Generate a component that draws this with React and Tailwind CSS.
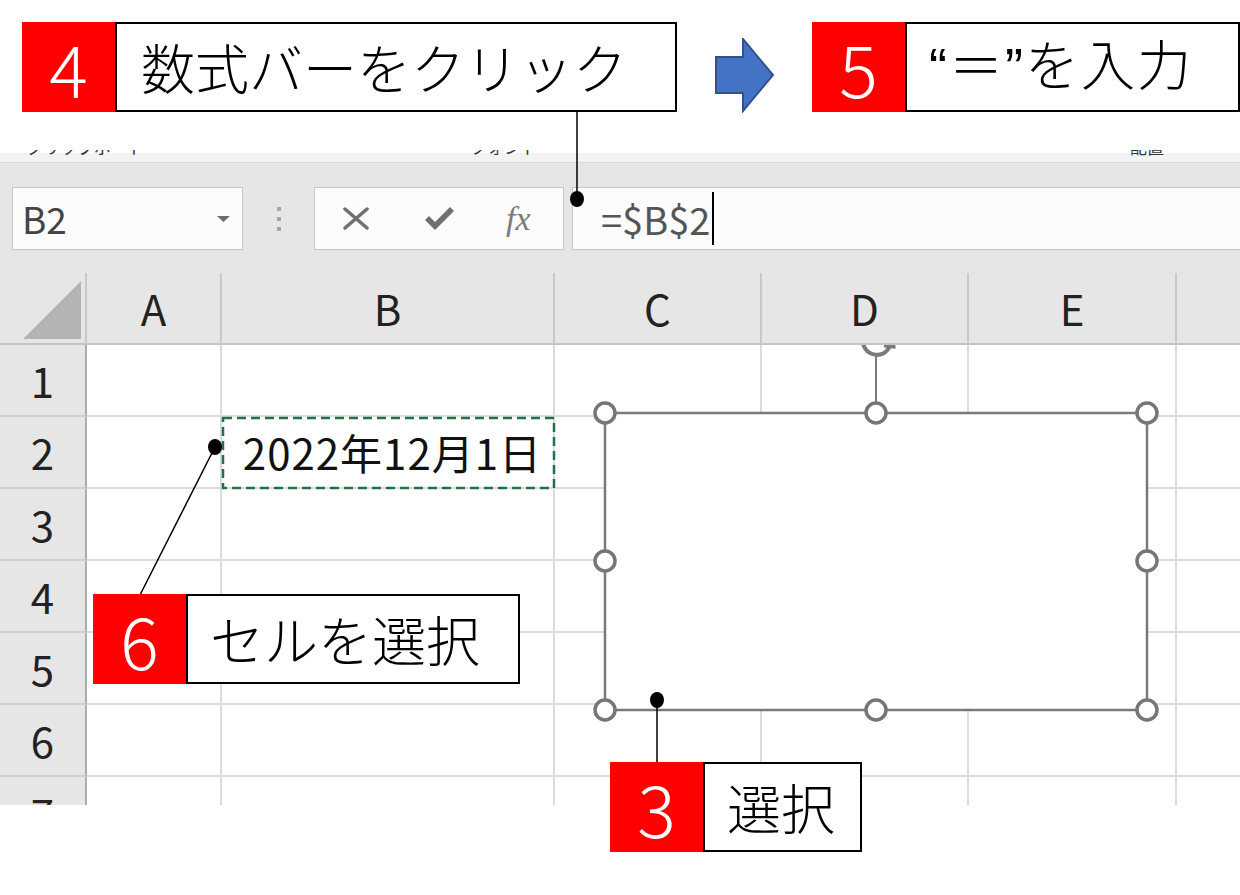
import React from 'react';

const colLetters = ['', 'A', 'B', 'C', 'D', 'E', ''];
const rowNums = [1, 2, 3, 4, 5, 6, 7];

// red number + white label box
function Callout({ num, boxClass, children }) {
  return (
    <div className="flex h-[90px]">
      <div className="w-[93px] shrink-0 bg-[#ff0000] flex items-center justify-center text-white text-[72px] font-light leading-none">
        {num}
      </div>
      <div className={`h-[90px] border-2 border-black bg-white flex items-center text-[54px] font-light leading-none text-black whitespace-nowrap ${boxClass}`}>
        {children}
      </div>
    </div>
  );
}

function Handle({ x, y }) {
  return <circle cx={x} cy={y} r="10" fill="#fff" stroke="#767676" strokeWidth="3.5" />;
}

export default function App() {
  return (
    <div className="relative w-[1240px] h-[895px] overflow-hidden bg-white font-['Noto_Sans_CJK_JP',sans-serif]">
      {/* top annotation row */}
      <div className="h-[150px] flex items-start pt-[22px] pl-[22px]">
        <Callout num="4" boxClass="w-[562px] pl-[24px]">数式バーをクリック</Callout>
        <svg className="ml-[38px] mt-[16px] shrink-0" width="60" height="75" viewBox="0 0 60 75">
          <polygon points="1,19 28,19 28,1 58,37 28,73 28,55 1,55" fill="#4472c4" stroke="#2f528f" strokeWidth="2" />
        </svg>
        <div className="ml-[37px]">
          <Callout num="5" boxClass="w-[335px] pl-[22px] tracking-[2px] font-['Liberation_Sans','Noto_Sans_CJK_JP',sans-serif]">“＝”を入力</Callout>
        </div>
      </div>

      {/* ribbon remnant, only the bottom of the group labels shows */}
      <div className="h-[13px] overflow-hidden flex items-start bg-[linear-gradient(#fff_3px,#f3f3f3_3px)] border-b border-[#d9d9d9] text-[17px] leading-[17px] text-[#333]">
        <div className="w-[470px] pl-[26px] -mt-[12px]">クリップボード</div>
        <div className="w-[660px] -mt-[12px]">フォント</div>
        <div className="-mt-[12px]">配置</div>
      </div>

      {/* formula bar */}
      <div className="h-[110px] bg-[#e6e6e6] flex items-start pt-[24px] pl-[12px]">
        <div className="w-[231px] h-[63px] shrink-0 border border-[#c6c6c6] bg-[#fcfcfc] flex items-center justify-between pl-[9px] pr-[12px]">
          <span className="text-[37px] leading-none text-[#444]">B2</span>
          <svg width="13" height="6" viewBox="0 0 13 6">
            <polygon points="0,0 13,0 6.5,6" fill="#6d6d6d" />
          </svg>
        </div>
        <div className="w-[71px] h-[63px] shrink-0 flex flex-col items-center justify-center gap-[6px]">
          <div className="w-[4px] h-[4px] bg-[#a6a6a6]" />
          <div className="w-[4px] h-[4px] bg-[#a6a6a6]" />
          <div className="w-[4px] h-[4px] bg-[#a6a6a6]" />
        </div>
        <div className="w-[250px] h-[63px] shrink-0 border border-[#c6c6c6] bg-[#fcfcfc] flex items-center pl-[28px]">
          <svg width="26" height="23" viewBox="0 0 26 23">
            <path d="M2 2 L24 21 M24 2 L2 21" stroke="#707070" strokeWidth="3.5" strokeLinecap="round" />
          </svg>
          <svg className="ml-[56px]" width="29" height="24" viewBox="0 0 29 24">
            <polygon points="0,13 4,9 10,15 25,0 29,4 10,23" fill="#707070" />
          </svg>
          <span className="ml-[52px] font-['Liberation_Serif',serif] italic text-[34px] leading-none text-[#7a7a7a]">fx</span>
        </div>
        <div className="ml-[8px] flex-1 h-[63px] border-y border-l border-[#c6c6c6] bg-[#fcfcfc] flex items-center pl-[28px]">
          <span className="text-[38px] leading-none text-[#555]">=$B$2</span>
          <span className="ml-[2px] w-[2px] h-[53px] bg-black" />
        </div>
      </div>

      {/* sheet */}
      <div className="h-[532px] overflow-hidden">
        <div className="grid grid-cols-[87px_135px_333px_207px_207px_208px_1fr] auto-rows-[72px] text-[#222]">
          {colLetters.map((c, i) =>
            i === 0 ? (
              <div key="corner" className="bg-[#e6e6e6] border-r-2 border-r-[#c8c8c8] border-b-2 border-b-[#c4c4c4] flex items-end justify-end pr-[4px] pb-[4px]">
                <svg width="58" height="58" viewBox="0 0 58 58">
                  <polygon points="58,0 58,58 0,58" fill="#b4b4b4" />
                </svg>
              </div>
            ) : (
              <div
                key={'h' + i}
                className={`bg-[#e6e6e6] border-b-2 border-b-[#c4c4c4] flex items-center justify-center text-[42px] leading-none ${i < 6 ? 'border-r-2 border-r-[#c8c8c8]' : ''}`}
              >
                {c}
              </div>
            )
          )}
          {rowNums.map((r) => (
            <React.Fragment key={r}>
              <div className="bg-[#e6e6e6] border-r-2 border-r-[#acacac] border-b-2 border-b-[#cfcfcf] flex items-center justify-center text-[42px] leading-none">
                {r}
              </div>
              {[1, 2, 3, 4, 5, 6].map((c) => (
                <div
                  key={c}
                  className={`border-b-2 border-b-[#dcdcdc] flex items-center justify-end ${c < 6 ? 'border-r-2 border-r-[#dcdcdc]' : ''}`}
                >
                  {r === 2 && c === 2 ? (
                    <span className="pr-[11px] text-[42px] tracking-[1px] leading-none text-[#111]">2022年12月1日</span>
                  ) : null}
                </div>
              ))}
            </React.Fragment>
          ))}
        </div>
      </div>

      {/* overlays: marquee, shape, leader lines */}
      <svg className="absolute left-0 top-0 pointer-events-none" width="1240" height="895" viewBox="0 0 1240 895">
        <defs>
          <clipPath id="belowHeader">
            <rect x="0" y="345" width="1240" height="60" />
          </clipPath>
        </defs>
        <rect x="223" y="418" width="331" height="70" fill="none" stroke="#217346" strokeWidth="2.5" strokeDasharray="9 5" />

        {/* rotation handle, mostly hidden under the header */}
        <g clipPath="url(#belowHeader)">
          <path d="M890 336 A14 14 0 1 1 866 332" fill="none" stroke="#7a7a7a" strokeWidth="4" />
          <path d="M884 346 L894 347 L893 337" fill="none" stroke="#7a7a7a" strokeWidth="3" />
        </g>
        <line x1="876" y1="356" x2="876" y2="403" stroke="#7a7a7a" strokeWidth="2" />
        <rect x="605" y="413" width="542" height="297" fill="#fff" stroke="#7a7a7a" strokeWidth="2.5" />
        <Handle x={605} y={413} />
        <Handle x={876} y={413} />
        <Handle x={1147} y={413} />
        <Handle x={605} y={561} />
        <Handle x={1147} y={561} />
        <Handle x={605} y={710} />
        <Handle x={876} y={710} />
        <Handle x={1147} y={710} />

        <line x1="577" y1="112" x2="577" y2="198" stroke="#000" strokeWidth="1.5" />
        <ellipse cx="577" cy="199" rx="7" ry="8" fill="#000" />

        <line x1="215" y1="447" x2="140" y2="595" stroke="#000" strokeWidth="1.5" />
        <ellipse cx="215" cy="447" rx="7" ry="8" fill="#000" />

        <line x1="657" y1="700" x2="657" y2="762" stroke="#000" strokeWidth="1.5" />
        <ellipse cx="657" cy="700" rx="7" ry="8" fill="#000" />
      </svg>

      <div className="absolute left-[93px] top-[594px]">
        <Callout num="6" boxClass="w-[334px] pl-[22px]">セルを選択</Callout>
      </div>
      <div className="absolute left-[610px] top-[762px]">
        <Callout num="3" boxClass="w-[159px] pl-[22px]">選択</Callout>
      </div>
    </div>
  );
}
